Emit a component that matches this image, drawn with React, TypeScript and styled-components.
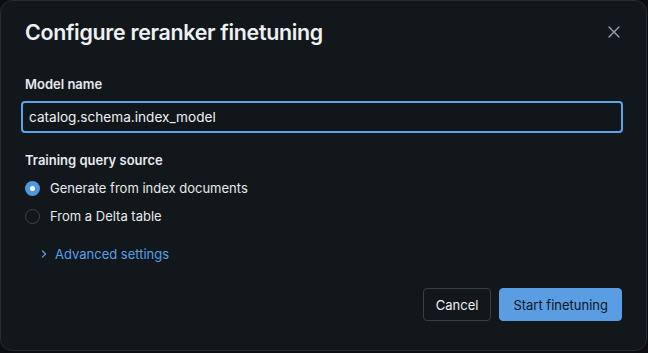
import React, { useState } from "react";
import styled, { createGlobalStyle } from "styled-components";

const GlobalStyle = createGlobalStyle`
  html, body {
    margin: 0;
    padding: 0;
    background: #0b0d10;
    font-family: Inter, "Noto Sans", "Liberation Sans", sans-serif;
  }
  * {
    box-sizing: border-box;
  }
`;

const Dialog = styled.div`
  width: 647px;
  height: 351px;
  background: #12171c;
  border: 1px solid #262c33;
  border-radius: 12px;
  padding: 16px 24px 0 24px;
  display: flex;
  flex-direction: column;
  color: #e6eaee;
`;

const Header = styled.div`
  display: flex;
  align-items: center;
  justify-content: space-between;
  height: 30px;
`;

const Title = styled.h2`
  margin: 0;
  font-size: 21.4px;
  font-weight: 600;
  letter-spacing: -0.3px;
  color: #eef1f4;
`;

const CloseButton = styled.button`
  width: 22px;
  height: 22px;
  margin-right: -3px;
  padding: 0;
  border: none;
  background: none;
  color: #9ba6b1;
  display: flex;
  align-items: center;
  justify-content: center;
  cursor: pointer;
`;

const Field = styled.div<{ $top: number }>`
  display: flex;
  flex-direction: column;
  margin-top: ${(p) => p.$top}px;
`;

const Label = styled.label`
  font-size: 13px;
  font-weight: 600;
  color: #e6eaee;
  line-height: 16px;
`;

const TextInput = styled.input`
  margin-top: 9px;
  margin-left: -4px;
  width: 602px;
  height: 32px;
  padding: 0 6px;
  border: 2px solid #5ea3ea;
  border-radius: 4px;
  background: #11161b;
  color: #eef1f4;
  font-family: inherit;
  font-size: 13.6px;
  caret-color: #eef1f4;
  outline: none;
`;

const RadioList = styled.div`
  display: flex;
  flex-direction: column;
  gap: 12px;
  margin-top: 12px;
`;

const RadioRow = styled.label`
  display: flex;
  align-items: center;
  gap: 10px;
  font-size: 13px;
  color: #e6eaee;
  height: 16px;
  cursor: pointer;
`;

const RadioDot = styled.span<{ $checked: boolean }>`
  width: 15px;
  height: 15px;
  border-radius: 50%;
  flex-shrink: 0;
  border: ${(p) => (p.$checked ? "none" : "1px solid #3b434c")};
  background: ${(p) => (p.$checked ? "#4f97e3" : "transparent")};
  display: flex;
  align-items: center;
  justify-content: center;

  &::after {
    content: "";
    display: ${(p) => (p.$checked ? "block" : "none")};
    width: 5px;
    height: 5px;
    border-radius: 50%;
    background: #ffffff;
  }
`;

const Advanced = styled.button`
  margin-top: 22px;
  margin-left: 15px;
  align-self: flex-start;
  display: flex;
  align-items: center;
  gap: 7px;
  padding: 0;
  border: none;
  background: none;
  color: #58a0e8;
  font-family: inherit;
  font-size: 13px;
  cursor: pointer;
`;

const Footer = styled.div`
  display: flex;
  justify-content: flex-end;
  gap: 8px;
  margin-top: 26px;
`;

const Button = styled.button<{ $primary?: boolean }>`
  height: 33px;
  padding: 0 ${(p) => (p.$primary ? 13 : 12)}px;
  border-radius: 4px;
  font-family: inherit;
  font-size: 13px;
  cursor: pointer;
  border: 1px solid ${(p) => (p.$primary ? "#5b9de3" : "#363d45")};
  background: ${(p) => (p.$primary ? "#5b9de3" : "transparent")};
  color: ${(p) => (p.$primary ? "#10161c" : "#eef1f4")};
`;

const options = ["Generate from index documents", "From a Delta table"];

export default function App() {
  const [name, setName] = useState("catalog.schema.index_model");
  const [source, setSource] = useState(0);

  return (
    <>
      <GlobalStyle />
      <Dialog>
        <Header>
          <Title>Configure reranker finetuning</Title>
          <CloseButton aria-label="Close">
            <svg width="12" height="12" viewBox="0 0 12 12" fill="none">
              <path d="M1 1L11 11M11 1L1 11" stroke="currentColor" strokeWidth="1.3" strokeLinecap="round" />
            </svg>
          </CloseButton>
        </Header>

        <Field $top={29}>
          <Label>Model name</Label>
          <TextInput value={name} onChange={(e) => setName(e.target.value)} autoFocus />
        </Field>

        <Field $top={19}>
          <Label>Training query source</Label>
          <RadioList>
            {options.map((opt, i) => (
              <RadioRow key={opt} onClick={() => setSource(i)}>
                <RadioDot $checked={source === i} />
                {opt}
              </RadioRow>
            ))}
          </RadioList>
        </Field>

        <Advanced>
          <svg width="8" height="8" viewBox="0 0 8 8" fill="none">
            <path d="M2.5 1L5.5 4L2.5 7" stroke="currentColor" strokeWidth="1.2" strokeLinecap="round" strokeLinejoin="round" />
          </svg>
          Advanced settings
        </Advanced>

        <Footer>
          <Button>Cancel</Button>
          <Button $primary>Start finetuning</Button>
        </Footer>
      </Dialog>
    </>
  );
}
